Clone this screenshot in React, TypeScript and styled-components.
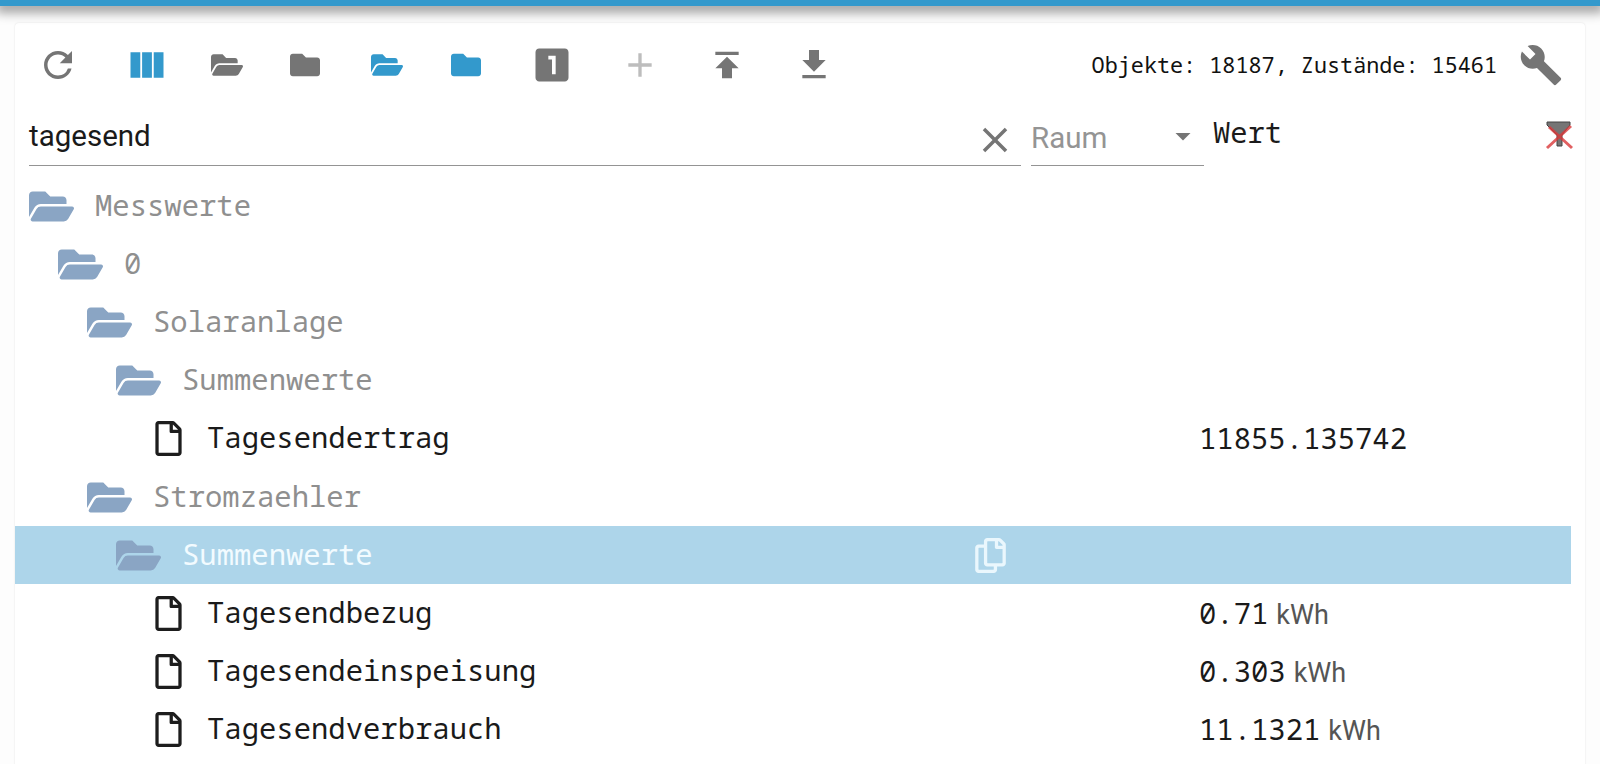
import styled, { createGlobalStyle } from "styled-components";
import type { ReactNode } from "react";
import { FaFolder, FaFolderOpen, FaRegCopy, FaRegFile } from "react-icons/fa";
import {
  MdAdd,
  MdArrowDropDown,
  MdBuild,
  MdClose,
  MdFileDownload,
  MdLooksOne,
  MdPublish,
  MdRefresh,
  MdViewColumn,
} from "react-icons/md";

const GlobalStyle = createGlobalStyle`
  html, body {
    margin: 0;
    padding: 0;
    background: #fdfdfd;
  }
`;

const MONO = `"Noto Sans Mono", "Droid Sans Mono", "Liberation Mono", monospace`;

const Page = styled.div`
  height: 764px;
  overflow: hidden;
  background: #fdfdfd;
`;

const TopBar = styled.div`
  position: relative;
  height: 6px;
  background: #3399cc;
  box-shadow: 0 3px 11px 4px rgba(0, 0, 0, 0.36);
`;

const Card = styled.div`
  margin: 17px 15px 0 15px;
  height: 760px;
  background: #fff;
  border-radius: 4px 4px 0 0;
  box-shadow: 0 0 2px rgba(0, 0, 0, 0.12);
`;

const Toolbar = styled.div`
  height: 84px;
  display: flex;
  align-items: center;
  padding: 0 22px 0 0;
`;

const ToolButton = styled.div<{ $width: number; $color: string; $size: number }>`
  width: ${(p) => p.$width}px;
  height: 48px;
  flex: none;
  display: flex;
  align-items: center;
  justify-content: center;
  color: ${(p) => p.$color};
  font-size: ${(p) => p.$size}px;
`;

const Counts = styled.div`
  margin-left: auto;
  padding-bottom: 2px;
  font-family: ${MONO};
  font-size: 21.8px;
  color: #111;
  white-space: nowrap;
`;

const SettingsIcon = styled.div`
  margin-left: 22px;
  color: #757575;
  font-size: 44px;
  display: flex;
`;

const FilterRow = styled.div`
  height: 70px;
  display: flex;
  align-items: stretch;
  padding-left: 14px;
`;

const SearchField = styled.div`
  width: 992px;
  height: 59px;
  box-sizing: border-box;
  border-bottom: 1px solid #949494;
  display: flex;
  align-items: flex-end;
  justify-content: space-between;
  padding: 0 6px 9px 0;
  font-family: Roboto, sans-serif;
  font-size: 29.5px;
  line-height: 40px;
  color: #1a1a1a;
`;

const ClearIcon = styled.span`
  display: flex;
  color: #757575;
  font-size: 42px;
  margin: 0 -1px -5px 0;
`;

const RoomSelect = styled.div`
  width: 173px;
  height: 59px;
  margin-left: 10px;
  box-sizing: border-box;
  border-bottom: 1px solid #949494;
  display: flex;
  align-items: flex-end;
  justify-content: space-between;
  padding-bottom: 7px;
  font-family: Roboto, sans-serif;
  font-size: 29.5px;
  line-height: 40px;
  color: #949494;
`;

const DropIcon = styled.span`
  display: flex;
  color: #757575;
  font-size: 36px;
  margin: 0 3px 4px 0;
`;

const ValueHead = styled.div`
  flex: 1;
  margin-left: 9px;
  padding: 6px 10px 0 0;
  display: flex;
  justify-content: space-between;
  font-family: ${MONO};
  font-size: 28.8px;
  line-height: 38px;
  color: #1a1a1a;
`;

const FilterOff = styled.svg`
  width: 32px;
  height: 32px;
  margin-top: 6px;
`;

const Tree = styled.div`
  display: flex;
  flex-direction: column;
  margin-right: 14px;
`;

const Row = styled.div<{ $selected?: boolean }>`
  height: 58.2px;
  display: grid;
  grid-template-columns: 1184px 1fr;
  align-items: center;
  background: ${(p) => (p.$selected ? "#add5ea" : "transparent")};
`;

const NameCell = styled.div<{ $level: number }>`
  display: flex;
  align-items: center;
  padding-left: ${(p) => 14 + p.$level * 29}px;
  position: relative;
`;

const FolderIcon = styled.span`
  display: flex;
  width: 51px;
  color: #8aa5c4;
  font-size: 45px;
  justify-content: flex-start;
`;

const FileIcon = styled.span`
  display: flex;
  width: 62px;
  padding-left: 6px;
  box-sizing: border-box;
  color: #1d1d1d;
  font-size: 35px;
`;

const NameText = styled.span<{ $folder: boolean; $selected?: boolean }>`
  font-family: ${MONO};
  font-size: 28.9px;
  padding-bottom: 4px;
  color: ${(p) => (p.$selected ? "#f2fbff" : p.$folder ? "#8f8f8f" : "#1a1a1a")};
  margin-left: ${(p) => (p.$folder ? 15 : 0)}px;
  white-space: nowrap;
`;

const CopyIcon = styled.span`
  position: absolute;
  left: 958px;
  display: flex;
  color: #eaf7fd;
  font-size: 35px;
`;

const ValueCell = styled.div`
  font-family: ${MONO};
  font-size: 28.9px;
  padding-bottom: 2px;
  color: #1a1a1a;
  white-space: nowrap;
`;

const Unit = styled.span`
  font-family: Roboto, sans-serif;
  font-size: 27px;
  color: #555;
  margin-left: 8px;
`;

interface TreeRow {
  readonly name: string;
  readonly level: number;
  readonly folder?: boolean;
  readonly selected?: boolean;
  readonly value?: string;
  readonly unit?: string;
}

const rows: ReadonlyArray<TreeRow> = [
  { name: "Messwerte", level: 0, folder: true },
  { name: "0", level: 1, folder: true },
  { name: "Solaranlage", level: 2, folder: true },
  { name: "Summenwerte", level: 3, folder: true },
  { name: "Tagesendertrag", level: 4, value: "11855.135742" },
  { name: "Stromzaehler", level: 2, folder: true },
  { name: "Summenwerte", level: 3, folder: true, selected: true },
  { name: "Tagesendbezug", level: 4, value: "0.71", unit: "kWh" },
  { name: "Tagesendeinspeisung", level: 4, value: "0.303", unit: "kWh" },
  { name: "Tagesendverbrauch", level: 4, value: "11.1321", unit: "kWh" },
];

const GREY = "#757575";
const BLUE = "#3399cc";

const tools: ReadonlyArray<{ icon: ReactNode; width: number; color: string; size: number }> = [
  { icon: <MdRefresh />, width: 85, color: GREY, size: 42 },
  { icon: <MdViewColumn />, width: 94, color: BLUE, size: 44 },
  { icon: <FaFolderOpen />, width: 66, color: GREY, size: 32 },
  { icon: <FaFolder />, width: 90, color: GREY, size: 30 },
  { icon: <FaFolderOpen />, width: 74, color: BLUE, size: 32 },
  { icon: <FaFolder />, width: 83, color: BLUE, size: 30 },
  { icon: <MdLooksOne />, width: 90, color: GREY, size: 44 },
  { icon: <MdAdd />, width: 85, color: "#bdbdbd", size: 40 },
  { icon: <MdPublish />, width: 89, color: GREY, size: 40 },
  { icon: <MdFileDownload />, width: 86, color: GREY, size: 40 },
];

const App = () => {
  return (
    <Page>
      <GlobalStyle />
      <TopBar />
      <Card>
        <Toolbar>
          {tools.map((tool, index) => (
            <ToolButton key={index} $width={tool.width} $color={tool.color} $size={tool.size}>
              {tool.icon}
            </ToolButton>
          ))}
          <Counts>Objekte: 18187, Zustände: 15461</Counts>
          <SettingsIcon>
            <MdBuild />
          </SettingsIcon>
        </Toolbar>
        <FilterRow>
          <SearchField>
            tagesend
            <ClearIcon>
              <MdClose />
            </ClearIcon>
          </SearchField>
          <RoomSelect>
            Raum
            <DropIcon>
              <MdArrowDropDown />
            </DropIcon>
          </RoomSelect>
          <ValueHead>
            Wert
            <FilterOff viewBox="0 0 32 32">
              <path d="M4 3h23v3l-8 10v11h-5V16L4 6z" fill="#757575" stroke="#444" strokeWidth="1" />
              <path d="M4 29L28 7M6 8l23 21" stroke="#d9383a" strokeOpacity="0.8" strokeWidth="3" fill="none" />
            </FilterOff>
          </ValueHead>
        </FilterRow>
        <Tree>
          {rows.map((row, index) => (
            <Row key={row.name + index} $selected={row.selected}>
              <NameCell $level={row.level}>
                {row.folder ? (
                  <FolderIcon>
                    <FaFolderOpen />
                  </FolderIcon>
                ) : (
                  <FileIcon>
                    <FaRegFile />
                  </FileIcon>
                )}
                <NameText $folder={!!row.folder} $selected={row.selected}>
                  {row.name}
                </NameText>
                {row.selected && (
                  <CopyIcon>
                    <FaRegCopy />
                  </CopyIcon>
                )}
              </NameCell>
              <ValueCell>
                {row.value}
                {row.unit && <Unit>{row.unit}</Unit>}
              </ValueCell>
            </Row>
          ))}
        </Tree>
      </Card>
    </Page>
  );
};

export default App;
